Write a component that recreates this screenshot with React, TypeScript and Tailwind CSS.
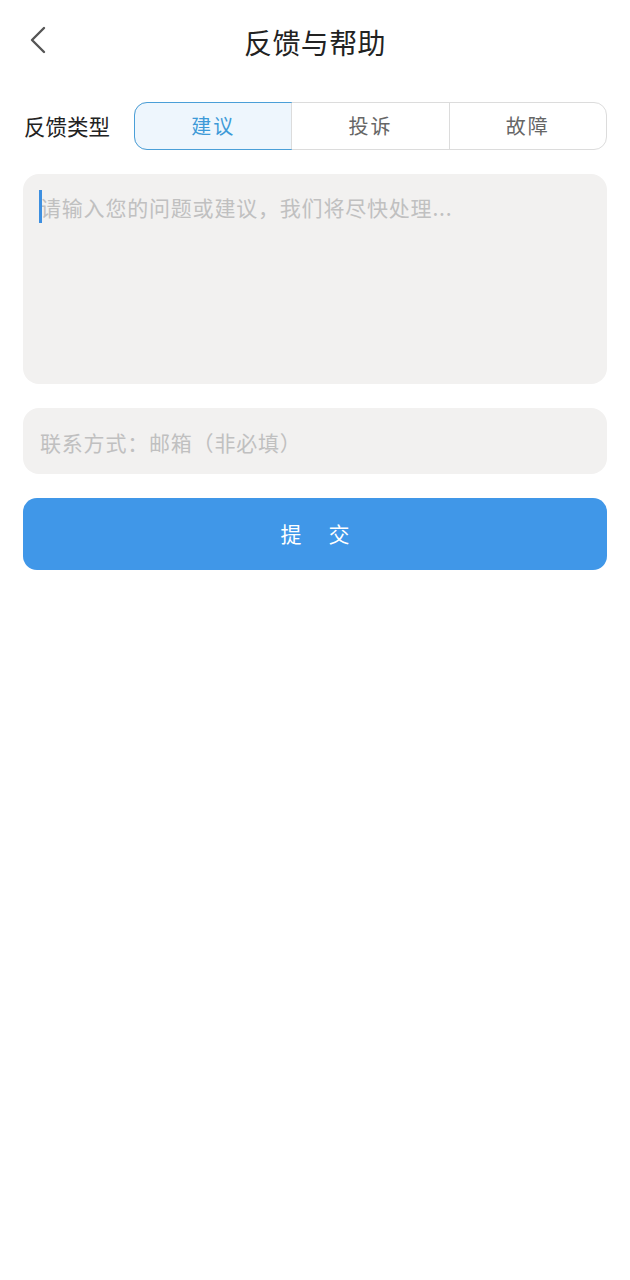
import React, { useState } from 'react';

const types = ['建议', '投诉', '故障'];

const App: React.FC = () => {
  const [active, setActive] = useState(0);

  return (
    <div
      className="min-h-screen w-full bg-white"
      style={{ fontFamily: '"Noto Sans CJK SC", "Noto Sans", sans-serif' }}
    >
      {/* header */}
      <div className="relative flex h-[84px] items-center justify-center">
        <button className="absolute left-[24px] top-[22px] flex h-[36px] w-[28px] items-center justify-center">
          <svg width="18" height="28" viewBox="0 0 18 28" fill="none">
            <path d="M15 2 L3 14 L15 26" stroke="#555" strokeWidth="2.4" strokeLinecap="round" strokeLinejoin="round" />
          </svg>
        </button>
        <h1 className="text-[28px] leading-none tracking-[0.4px] text-[#222]">反馈与帮助</h1>
      </div>

      <div className="px-[23px]">
        {/* feedback type */}
        <div className="mt-[18px] flex items-center">
          <span className="w-[111px] pl-[1px] text-[21.5px] text-[#222]">反馈类型</span>
          <div className="flex h-[48px] flex-1 rounded-[13px] border border-[#dcdcdc]">
            {types.map((t, i) => (
              <button
                key={t}
                onClick={() => setActive(i)}
                className={`flex flex-1 items-center justify-center text-[20px] tracking-[2px] ${
                  i > 0 ? 'border-l border-[#dcdcdc]' : ''
                } ${
                  active === i
                    ? '-m-px rounded-[13px] rounded-r-none border border-[#4a9fd8] bg-[#eef6fd] text-[#3d9ad8]'
                    : 'text-[#666]'
                } ${active === i && i === 2 ? 'rounded-l-none rounded-r-[13px]' : ''} ${
                  active === i && i === 1 ? 'rounded-none' : ''
                }`}
              >
                {t}
              </button>
            ))}
          </div>
        </div>

        {/* content */}
        <div className="relative mt-[24px] h-[210px] rounded-[16px] bg-[#f2f1f0] px-[17px] pt-[16px]">
          <textarea
            className="h-full w-full resize-none bg-transparent text-[21px] leading-[34px] tracking-[0.8px] text-[#333] caret-[#3d8fe0] outline-none placeholder:text-[#c0c0c0]"
            placeholder="请输入您的问题或建议，我们将尽快处理..."
          />
          <span className="pointer-events-none absolute left-[16px] top-[16px] h-[33px] w-[3px] bg-[#3d8fe0]" />
        </div>

        {/* contact */}
        <div className="mt-[24px] flex h-[66px] items-center rounded-[16px] bg-[#f2f1f0] px-[17px] pt-[3px]">
          <input
            className="w-full bg-transparent text-[21px] tracking-[0.8px] text-[#333] outline-none placeholder:text-[#c0c0c0]"
            placeholder="联系方式：邮箱（非必填）"
          />
        </div>

        {/* submit */}
        <button className="mt-[24px] flex h-[72px] w-full items-center justify-center gap-[27px] rounded-[14px] bg-[#4097e8] text-[21px] text-white">
          <span>提</span>
          <span>交</span>
        </button>
      </div>
    </div>
  );
};

export default App;
